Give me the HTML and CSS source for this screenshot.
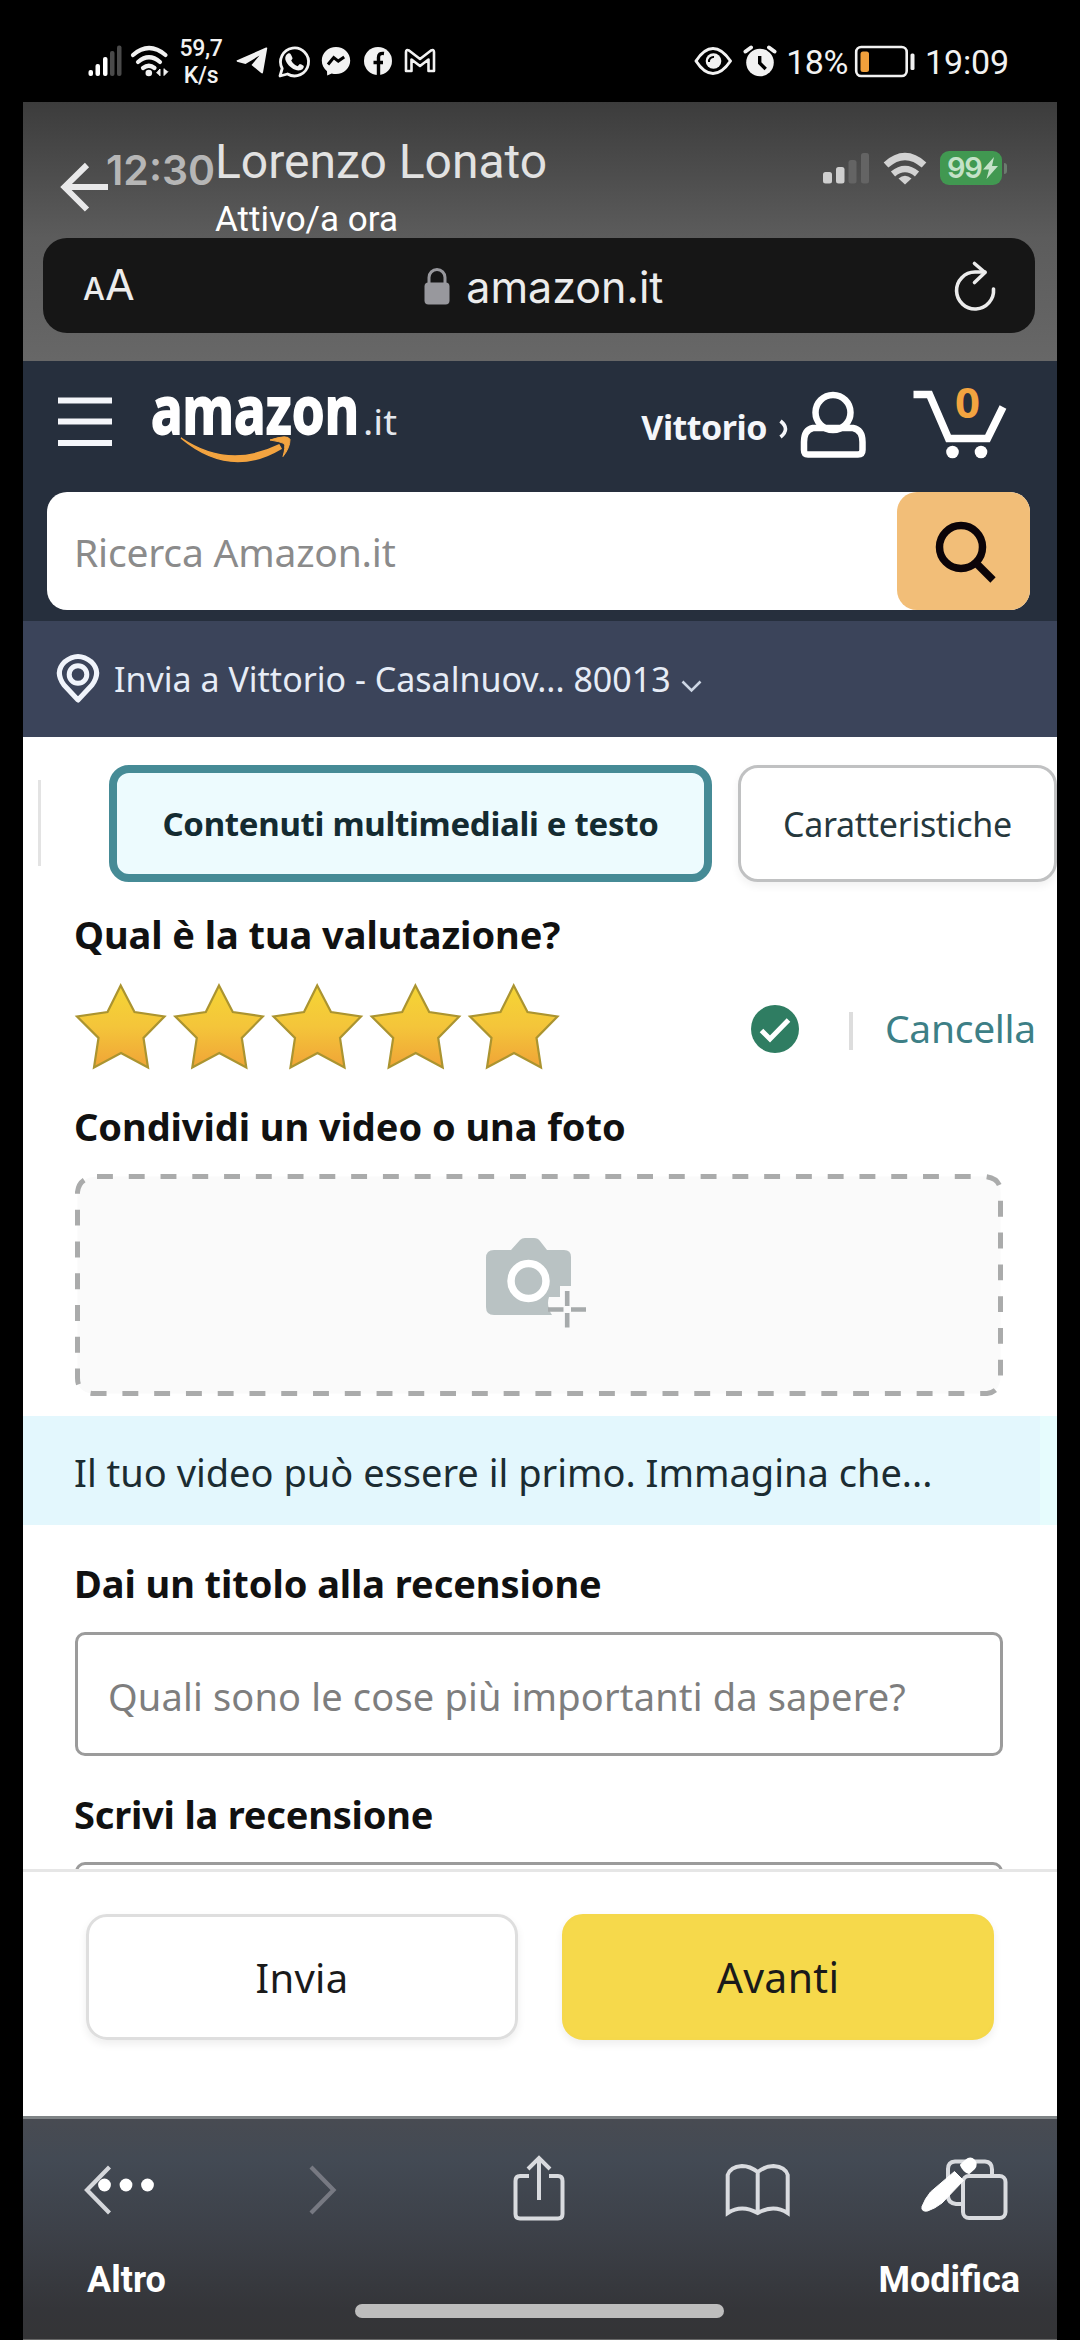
FILE: index.html
```html
<!DOCTYPE html>
<html lang="it">
<head>
<meta charset="utf-8">
<title>Recensione</title>
<link rel="stylesheet" href="styles.css">
</head>
<body>
<div class="screen">
  <header class="status">
    <svg class="st-signal" width="34" height="32" viewBox="88 45 34 32"><g fill="#fff"><rect x="88.5" y="70" width="4.5" height="6" rx="2"/><rect x="95.5" y="64" width="4.5" height="12" rx="2"/><rect x="103" y="57" width="4.5" height="19" rx="2"/></g><g fill="#4a4a4a"><rect x="110" y="51" width="4.5" height="25" rx="2"/><rect x="117" y="45.500" width="4.500" height="30.500" rx="2"/></g></svg>
    <svg class="st-wifi" width="40" height="32" viewBox="130 45 40 32"><g fill="none" stroke="#f2f2f2" stroke-width="4.200" stroke-linecap="round"><path d="M133 55q16-14 32.500 0"/><path d="M138 62q11-9.500 22 0"/><path d="M143 68q6-4.500 11.500 0"/></g><circle cx="148.800" cy="73" r="3.300" fill="#f2f2f2"/><path d="M156.500 73l3.500-4V76M168 71.500l-4 4v-7" fill="#f2f2f2" stroke="#f2f2f2" stroke-width="1"/></svg>
    <div class="st-speed"><span class="t">59,7</span><span class="t">K/s</span></div>
    <svg class="st-tg" width="32" height="28" viewBox="236 49 32 28"><path d="M236.500 62.500L266 49.500q1.500-.5 1.200 1L263 74.500q-.5 1.500-1.800.5l-9.700-8 8-9.500-14 8.500-8.500-2.200z" fill="#f2f2f2"/></svg>
    <svg class="st-wa" width="32" height="33" viewBox="278 45 32 33"><path d="M280 76l2.200-7.500A14 14 0 1 1 287.500 74z" fill="none" stroke="#f2f2f2" stroke-width="2.800" stroke-linejoin="round"/><path d="M288 53.500c2-1 3 0 4.500 4.500.2 1-.8 1.800-1.300 2.600 1.600 3 3.600 4.600 6.400 5.700l2.200-2.200c2.500.8 4 1.600 4 2.200 0 4-5 5-8.500 3.500-5.500-2-9-6.500-10-10.500-.4-2.500.9-4.800 2.700-5.800z" fill="#f2f2f2"/></svg>
    <svg class="st-ms" width="30" height="31" viewBox="321 46 30 31"><path d="M336 47c8 0 14.200 5.900 14.200 13.500S344 74 336 74c-1.500 0-3-.2-4.300-.6l-4.500 2.200-.2-4.400c-3.200-2.500-5.200-6.300-5.200-10.700C321.800 52.900 328 47 336 47z" fill="#f2f2f2"/><path d="M328 64.500l5.700-7 4.600 3.600 5.900-4" fill="none" stroke="#000" stroke-width="3"/></svg>
    <svg class="st-fb" width="30" height="30" viewBox="363 46 30 30"><circle cx="378" cy="61" r="14" fill="#f2f2f2"/><path d="M378.500 76V57.500c0-3 1.500-4.500 5.500-4M373.500 62.500h9.500" fill="none" stroke="#000" stroke-width="3.400"/></svg>
    <svg class="st-gm" width="32" height="26" viewBox="404 48 32 26"><path d="M406 71V52q0-3 3-1.500L420 59l11-8.500q3-1.500 3 1.500V71h-5.500V59.500L420 66l-8.500-6.500V71z" fill="none" stroke="#f2f2f2" stroke-width="2.600" stroke-linejoin="round"/></svg>
    <div class="st-gap"></div>
    <svg class="st-eye" width="38" height="30" viewBox="694 46 38 30"><path d="M696 61Q704 48.500 713 48.500T730.500 61Q722 73.500 713 73.500T696 61z" fill="none" stroke="#f2f2f2" stroke-width="3" stroke-linejoin="round"/><circle cx="713.500" cy="61" r="7.800" fill="#f2f2f2"/><path d="M709 62a4.500 4.500 0 0 1 5-5" fill="none" stroke="#000" stroke-width="2"/></svg>
    <svg class="st-alarm" width="34" height="32" viewBox="743 45 34 32"><circle cx="760" cy="62.500" r="13.800" fill="#f2f2f2"/><path d="M745.500 51.500l5.500-4M774.500 51.500l-5.500-4" stroke="#f2f2f2" stroke-width="4" stroke-linecap="round"/><path d="M759.700 56v7l6 6" fill="none" stroke="#000" stroke-width="3.400"/></svg>
    <span class="t st-num">18%</span>
    <svg class="st-bat" width="61" height="33" viewBox="854 45 61 33"><rect x="856.200" y="47" width="50.500" height="29" rx="5" fill="none" stroke="#f2f2f2" stroke-width="2.600"/><rect x="860.500" y="51.500" width="8.500" height="20.500" rx="2.500" fill="#f0a03c"/><rect x="910.500" y="53.500" width="4" height="16.500" rx="1.500" fill="#f2f2f2"/></svg>
    <span class="t st-num st-clock">19:09</span>
  </header>

  <main class="photo">
    <div class="ios-status">
      <span class="t ios-time">12:30</span>
      <svg class="ios-sig" width="47" height="32" viewBox="823 152 47 32"><g fill="#cfcfcf"><rect x="823" y="172" width="9" height="11.500" rx="2.500"/><rect x="836" y="167" width="8.500" height="16.500" rx="2.500"/></g><g fill="#646464"><rect x="848.500" y="160" width="8" height="23.500" rx="2.500"/><rect x="861" y="153" width="8" height="30.500" rx="2.500"/></g></svg>
      <svg class="ios-wifi" width="44" height="34" viewBox="883 150 44 34"><path d="M886 164q19-17 38 0" fill="none" stroke="#d2d2d2" stroke-width="7"/><path d="M893 173q12-10 24 0" fill="none" stroke="#d2d2d2" stroke-width="6.500"/><path d="M898.500 177.500q6.500-5.500 13 0L905 183.500z" fill="#d2d2d2"/></svg>
      <div class="ios-bat"><span class="t">99</span><svg width="15" height="22" viewBox="0 0 15 22"><path d="M11 0L0 12.500h6L3.500 22 15 9H9z" fill="#c4e2c8"/></svg></div>
      <i class="ios-tip"></i>
    </div>

    <div class="urlbar">
      <span class="aa"><small>A</small>A</span>
      <svg width="26" height="38" viewBox="0 0 26 38"><rect x=".5" y="15.500" width="25" height="22" rx="4" fill="#98989d"/><path d="M5 17v-6.500a8 8 0 0 1 16 0V17" fill="none" stroke="#98989d" stroke-width="3"/></svg>
      <span class="t url">amazon.it</span>
      <svg class="reload" width="44" height="50" viewBox="954 259 44 50"><path d="M994.500 287a18.500 18.500 0 1 1-18.500-17h10" fill="none" stroke="#ececec" stroke-width="3.600" stroke-linecap="round"/><path d="M975.500 261.500l10.500 9-10.500 10" fill="none" stroke="#ececec" stroke-width="3.600" stroke-linecap="round" stroke-linejoin="round"/></svg>
    </div>

    <div class="nav">
      <svg class="burger" width="54" height="50" viewBox="0 0 54 50"><path d="M0 3.500h54M0 24.500h54M0 46h54" stroke="#f4f6fa" stroke-width="6"/></svg>
      <svg class="logo" width="250" height="80" viewBox="150 390 250 80"><text class="logo-name" x="151" y="433.500" textLength="208" lengthAdjust="spacingAndGlyphs">amazon</text><text class="logo-tld" x="363" y="434.500" textLength="34" lengthAdjust="spacingAndGlyphs">.it</text><path d="M181 438Q228 470 279 445l2 3.500Q230 479 181 438z" fill="#f3a440" stroke="#f3a440" stroke-width="1.500"/><path d="M270 440q18-6 20-.5 0 8-7 17 3-10 1-13-4-2-14-3.500z" fill="#f3a440" stroke="#f3a440" stroke-width="1"/></svg>
      <span class="t user">Vittorio</span>
      <svg class="caret" width="9" height="18" viewBox="0 0 9 18"><path d="M1.500 1q10 8 0 16" fill="none" stroke="#f4f6fa" stroke-width="3.600"/></svg>
      <svg class="person" width="66" height="68" viewBox="800 391 66 68"><g fill="none" stroke="#fff" stroke-width="6.500"><circle cx="833" cy="412.500" r="17.500"/><path d="M813 428h40q9.500 2 9.500 14v8q0 4.500-4.500 4.500h-50q-4 0-4-4.500v-8q0-12 9-14z" stroke-linejoin="round"/></g></svg>
      <svg class="cart" width="96" height="74" viewBox="911 385 96 74"><path d="M913.500 393.500h16L948.500 437.500h39L1003 406" fill="none" stroke="#fff" stroke-width="7.500"/><circle cx="952.500" cy="451" r="6.300" fill="#fff"/><circle cx="981" cy="451" r="6.300" fill="#fff"/><text class="cart-n" x="955" y="416.500" textLength="25" lengthAdjust="spacingAndGlyphs">0</text></svg>
    </div>

    <div class="search-row">
      <div class="search">
        <span class="t">Ricerca Amazon.it</span>
        <div class="search-btn"><svg width="64" height="66" viewBox="0 0 64 66"><circle cx="27" cy="27" r="21.500" fill="none" stroke="#0c0408" stroke-width="7.500"/><path d="M41.500 42.500L59 60" stroke="#0c0408" stroke-width="7.500"/></svg></div>
      </div>
    </div>

    <div class="ship">
      <svg width="44" height="52" viewBox="56 654 44 52"><path d="M78 701L64 686Q54.500 673 64.500 663q13.500-11 27 0 10 10 .5 23z" fill="none" stroke="#f0f4fb" stroke-width="5" stroke-linejoin="round"/><circle cx="78" cy="675.500" r="8.800" fill="none" stroke="#f0f4fb" stroke-width="5"/></svg>
      <span class="t">Invia a Vittorio - Casalnuov... 80013</span>
      <svg class="chev" width="21" height="13" viewBox="0 0 21 13"><path d="M1.500 1.500l9 9 9-9" fill="none" stroke="#cdd6e4" stroke-width="2.600"/></svg>
    </div>

    <div class="tabs">
      <i class="tab-edge"></i>
      <div class="tab tab-on"><span class="t">Contenuti multimediali e testo</span></div>
      <div class="tab"><span class="t">Caratteristiche</span></div>
    </div>

    <h3 class="q1"><span class="t">Qual è la tua valutazione?</span></h3>
    <div class="rate">
      <svg width="490" height="91" viewBox="75 982 490 91">
        <defs><linearGradient id="gold" x1="0" y1="0" x2="0" y2="1"><stop offset="0" stop-color="#f5d535"/><stop offset=".5" stop-color="#f4c53a"/><stop offset="1" stop-color="#f0a437"/></linearGradient>
        <path id="star" d="M120.700 985.500L134.500 1012 164.500 1016.500 143.500 1038 148 1067.500 121 1053 94 1067.500 98.500 1038 77 1016.500 107.500 1012z" fill="url(#gold)" stroke="#ab9430" stroke-width="2.200"/></defs>
        <use href="#star"/><use href="#star" x="98.300"/><use href="#star" x="196.500"/><use href="#star" x="294.700"/><use href="#star" x="393"/>
      </svg>
      <svg class="ok" width="48" height="48" viewBox="0 0 48 48"><circle cx="24" cy="24" r="24" fill="#2f7d62"/><path d="M10.500 25.500l8.500 8.500L37.500 15" fill="none" stroke="#fff" stroke-width="5"/></svg>
      <i class="bar"></i>
      <span class="t cancel">Cancella</span>
    </div>
    <h3 class="q2"><span class="t">Condividi un video o una foto</span></h3>

    <div class="drop">
      <svg width="930" height="225" viewBox="74 1173 930 225"><path d="M97 1176.500H985Q1000.500 1178 1000.500 1192V1378Q999.500 1392 987 1393.500H92Q77.500 1392 77.500 1378V1192Q79 1177.500 97 1176.500z" fill="#fafafa" stroke="#aaabab" stroke-width="5" stroke-dasharray="15.900 15.870"/>
      <path d="M494 1250h17l9-10q2-2 5-2h9q4 0 6 3l7 9h17q7 0 7 7v29h-11v11h-11q-3 9 3 18H494q-8 0-8-8v-49q0-8 8-8z" fill="#b9c2c3"/><circle cx="528.500" cy="1281" r="17.500" fill="#b9c2c3" stroke="#fff" stroke-width="7.500"/><path d="M548 1309.500h15.500M571 1309.500h15M567.200 1291v15M567.200 1313v14.500" stroke="#a6aaab" stroke-width="4.600"/></svg>
    </div>

    <div class="hint"><span class="t">Il tuo video può essere il primo. Immagina che...</span></div>

    <h3 class="q3"><span class="t">Dai un titolo alla recensione</span></h3>
    <div class="field"><div class="input"><span class="t">Quali sono le cose più importanti da sapere?</span></div></div>
    <h3 class="q4"><span class="t">Scrivi la recensione</span></h3>
    <div class="field clip"><div class="input"></div></div>

    <div class="actions">
      <div class="btn"><span class="t">Invia</span></div>
      <div class="btn btn-y"><span class="t">Avanti</span></div>
    </div>

    <div class="safari">
      <svg class="s-back" width="30" height="52" viewBox="0 0 30 52"><path d="M26.500 3L4 26l22.500 23" fill="none" stroke="#d5d7db" stroke-width="4.200"/></svg>
      <svg class="s-fwd" width="30" height="52" viewBox="0 0 30 52"><path d="M3 3l22.500 23L3 49" fill="none" stroke="#777982" stroke-width="4.200"/></svg>
      <svg class="s-share" width="54" height="66" viewBox="512 2156 54 66"><path d="M529 2177h-9q-4.500 0-4.500 5v33q0 4.500 4.500 4.500h38q4.500 0 4.500-4.500v-33q0-5-4.500-5h-9" fill="none" stroke="#d9dbdf" stroke-width="4"/><path d="M539 2201v-40M528 2170l11-11 11 11" fill="none" stroke="#d9dbdf" stroke-width="4"/></svg>
      <svg class="s-book" width="66" height="54" viewBox="725 2164 66 54"><path d="M757.700 2214v-41Q750 2167 742 2167q-12 1-14.300 9v38q14-9 30 0 16-9 30 0v-38q-2-8-14.300-9-8 0-15.700 6" fill="none" stroke="#d9dbdf" stroke-width="4"/></svg>
      <svg class="s-tabs" width="64" height="62" viewBox="944 2160 64 62"><rect x="963" y="2177" width="42.500" height="42" rx="6" fill="none" stroke="#d9dbdf" stroke-width="4"/><path d="M962 2205h-6q-8-1-8-8v-27q0-7 7-7.500h30q7 .5 7 8v5" fill="none" stroke="#d9dbdf" stroke-width="4"/></svg>
      <i class="home"></i>
    </div>

    <div class="chat-top">
      <svg width="50" height="50" viewBox="60 161 50 50"><path d="M108 186H64M87 164L64.500 186 87 208.500" fill="none" stroke="#e9e9ea" stroke-width="6"/></svg>
      <div class="chat-who"><span class="t who">Lorenzo Lonato</span><span class="t seen">Attivo/a ora</span></div>
    </div>
    <div class="chat-act chat-more">
      <svg width="56" height="60" viewBox="0 0 56 60"><g fill="#fff"><circle cx="6.500" cy="30" r="6.400"/><circle cx="28" cy="30" r="6.400"/><circle cx="49.500" cy="30" r="6.400"/></g></svg>
      <span class="t">Altro</span>
    </div>
    <div class="chat-act chat-edit">
      <svg width="58" height="60" viewBox="920 2155 58 60"><g fill="#fff" stroke="#fff" stroke-linejoin="round"><path d="M954.500 2171.500l9 9-21.500 22.500q-7 5.500-14.500 8-6.500 1-5.500-4.500 3-8 8.500-14.500z" stroke-width="1"/><path d="M961 2165l5-4.500q4.500-4 8 0 3.500 4 0 8l-5 4.500q-5.500-2-8-8z" stroke-width="2"/></g></svg>
      <span class="t">Modifica</span>
    </div>
  </main>
</div>
</body>
</html>
```
FILE: styles.css
```css
* { box-sizing: border-box; }
body { margin: 0; background: #000; font-family: "Noto Sans", "Open Sans", sans-serif; }
svg { display: block; flex: none; overflow: visible; }
.t { display: inline-block; white-space: nowrap; flex: none; }
.screen { width: 1080px; height: 2340px; overflow: hidden; background: #000; }

/* phone status bar */
.status { height: 102px; display: flex; align-items: center; padding: 20px 71px 0 88px; font-family: Roboto, sans-serif; color: #f2f2f2; }
.st-wifi { margin-left: 8px; }
.st-speed { display: flex; flex-direction: column; align-items: center; width: 44px; margin: 2px 0 0 9px; font-size: 23px; line-height: 27px; font-weight: 500; letter-spacing: -.3px; }
.st-tg { margin-left: 13px; }
.st-wa { margin-left: 10px; }
.st-ms { margin-left: 11px; }
.st-fb { margin-left: 12px; }
.st-gm { margin-left: 11px; }
.st-gap { flex: 1; }
.st-alarm { margin-left: 11px; }
.st-num { font-size: 34px; line-height: 40px; margin: 2px 0 0 9px; letter-spacing: -.4px; }
.st-bat { margin-left: 6px; }
.st-clock { margin-left: 10px; letter-spacing: -.15px; }

.photo { position: relative; width: 1034px; height: 2238px; margin-left: 23px; overflow: hidden; background: linear-gradient(#3c3c3c 0, #5c5c5c 136px, #676767 258px); }
.ios-status { height: 136px; padding: 0 50px 4px 83px; display: flex; align-items: center; }
.ios-time { font: 600 41px/48px Inter, sans-serif; color: #b6b6b6; margin: 3px auto 0 0; }
.ios-wifi { margin-left: 13px; }
.ios-bat { display: flex; align-items: center; gap: 1px; width: 62px; height: 34px; margin-left: 13px; padding-left: 7px; border-radius: 9px; background: #419851; color: #c4e2c8; font: 600 29px/34px Inter, sans-serif; letter-spacing: -1.2px; }
.ios-tip { width: 3px; height: 11px; margin-left: 2px; border-radius: 0 3px 3px 0; background: #6b7b6e; }

.urlbar { display: flex; align-items: center; height: 95px; margin: 0 22px 28px 20px; padding: 0 38px 0 40px; border-radius: 24px; background: #161616; color: #ececec; font-family: Inter, sans-serif; }
.aa { font-size: 43px; line-height: 50px; margin: 2px auto 0 0; }
.aa small { font-size: 31px; font-weight: 500; }
.url { font-size: 43px; line-height: 50px; margin: 2px auto 0 16px; }

/* store header */
.nav { display: flex; align-items: center; height: 131px; padding: 0 50px 0 35px; background: #262f3d; color: #f4f6fa; }
.burger { margin-bottom: 10px; }
.logo { margin: 7px 0 0 38px; }
.logo-name { font: 700 66px "Noto Sans", sans-serif; fill: #fff; stroke: #fff; stroke-width: 1.8px; }
.logo-tld { font: 400 34px "Noto Sans", sans-serif; fill: #e4e8ee; }
.user { font-weight: 700; font-size: 34px; line-height: 40px; margin-left: auto; letter-spacing: -.5px; }
.caret { margin: 4px 12px 0 12px; }
.person { margin-bottom: 3px; }
.cart { margin: 0 0 8px 45px; }
.cart-n { font: 700 41px "Noto Sans", sans-serif; fill: #f3a440; }

.search-row { height: 129px; padding: 0 27px 0 24px; background: #262f3d; }
.search { display: flex; align-items: center; justify-content: space-between; height: 118px; padding-left: 27px; background: #fff; border-radius: 20px; color: #8b8b8b; font-size: 39px; letter-spacing: -.2px; }
.search-btn { display: flex; align-items: center; justify-content: center; width: 133px; height: 118px; padding: 4px 0 0 5px; border-radius: 20px; background: #f2be78; }

.ship { display: flex; align-items: center; height: 116px; padding-left: 33px; background: #3b445a; color: #e6ecf6; font-size: 34px; }
.ship .t { margin: 0 0 0 14px; }
.chev { margin: 14px 0 0 10px; }

/* review form */
.tabs { display: flex; height: 145px; padding-top: 28px; background: #fff; font-size: 34px; letter-spacing: -.3px; color: #26383d; }
.tab-edge { width: 3px; height: 86px; margin: 15px 68px 0 15px; background: #e3e3e3; flex: none; }
.tab { display: flex; align-items: center; justify-content: center; width: 319px; height: 117px; flex: none; border: 3px solid #c0c1c2; border-radius: 20px; box-shadow: 0 4px 8px rgba(0,0,0,.06); }
.tab-on { width: 603px; margin-right: 26px; border: 8px solid #468b96; background: #edfbfe; color: #142b31; font-size: 33px; font-weight: 700; box-shadow: none; }

h3 { display: flex; align-items: center; margin: 0; padding-left: 51px; background: #fff; color: #111; font-size: 38px; font-weight: 700; letter-spacing: -.07px; }
.q1 { height: 100px; padding-top: 4px; }
.q2 { height: 101px; padding-top: 4px; }
.q3 { height: 107px; padding-top: 8px; }
.q4 { height: 106px; padding-top: 10px; letter-spacing: -.2px; }

.rate { display: flex; align-items: center; height: 91px; padding-left: 52px; background: #fff; }
.ok { margin: 3px 0 0 186px; }
.bar { width: 4px; height: 38px; margin: 7px 0 0 50px; background: #ddd; }
.cancel { margin-left: 32px; color: #3d7f86; font-size: 39px; line-height: 50px; letter-spacing: -.3px; }

.drop { height: 243px; padding-left: 51px; background: #fff; }
.drop svg { margin-top: -1px; }
.hint { display: flex; align-items: center; height: 109px; padding: 2px 0 0 51px; background: linear-gradient(90deg, #e3f7fd 1017px, #e6fcfd 1017px); color: #1b2c32; font-size: 38px; }

.field { padding-left: 52px; background: #fff; }
.input { display: flex; align-items: center; width: 928px; height: 124px; padding: 4px 0 0 30px; border: 3px solid #9b9b9b; border-radius: 10px; background: #fff; color: #7e7e7e; font-size: 38px; letter-spacing: .16px; }
.clip { height: 7px; overflow: hidden; }

.actions { display: flex; gap: 44px; height: 247px; padding: 42px 63px 0; border-top: 3px solid #e6e6e6; background: #fff; }
.btn { display: flex; align-items: center; justify-content: center; flex: 1; height: 126px; border: 3px solid #dedede; border-radius: 21px; box-shadow: 0 4px 8px rgba(0,0,0,.07); color: #1a1a1a; font-size: 40px; letter-spacing: .3px; }
.btn-y { border-color: #f5d84b; background: #f6d94b; font-size: 41px; }

/* browser toolbar */
.safari { position: relative; display: flex; align-items: flex-start; height: 223px; padding: 36px 0 0 60px; border-top: 3px solid #7f8486; background: linear-gradient(#484b52, #434a54 40px, #3d4149 110px, #343539 190px, #343436); }
.s-back { margin-top: 9px; }
.s-fwd { margin: 9px 0 0 195px; }
.s-share { margin-left: 174px; }
.s-book { margin: 8px 0 0 159px; }
.s-tabs { margin: 4px 0 0 153px; }
.home { position: absolute; left: 332px; top: 185px; width: 369px; height: 14px; border-radius: 7px; background: #bdbdbd; }

/* chat viewer controls over the photo */
.chat-top { position: absolute; left: 37px; top: 32px; display: flex; align-items: center; font-family: Roboto, sans-serif; color: #fff; }
.chat-top svg { margin-bottom: 10px; }
.chat-who { display: flex; flex-direction: column; align-items: flex-start; margin-left: 105px; }
.who { font-size: 48px; line-height: 56px; color: #e2e2e2; }
.seen { font-size: 35px; line-height: 59px; }
.chat-act { position: absolute; bottom: 39px; display: flex; flex-direction: column; align-items: center; font: 700 36px/42px Roboto, sans-serif; color: #fff; }
.chat-more { left: 64px; }
.chat-edit { right: 37px; }
.chat-act svg { margin-bottom: 44px; }
.chat-edit svg { margin-right: 1px; }
```
